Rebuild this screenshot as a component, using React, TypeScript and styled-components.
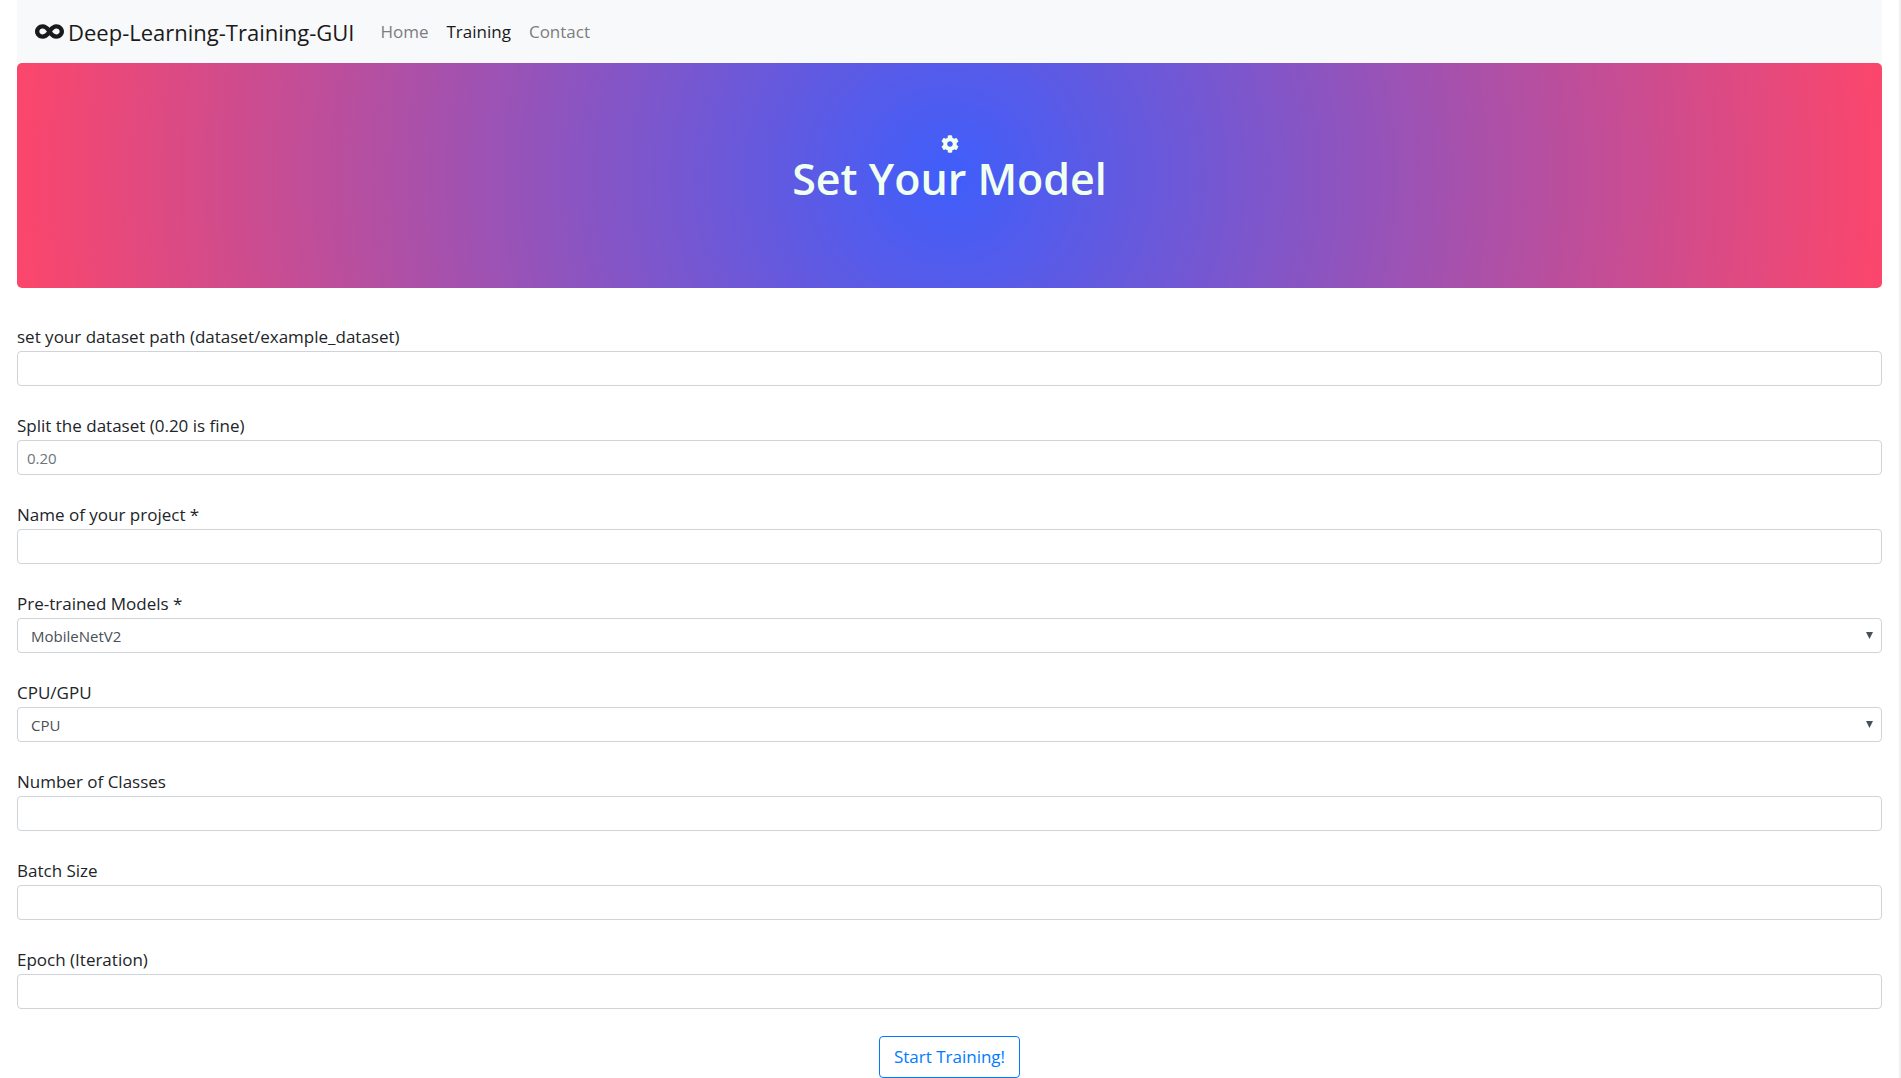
import React from "react";
import styled, { createGlobalStyle } from "styled-components";
import { FaCog, FaInfinity } from "react-icons/fa";

const GlobalStyle = createGlobalStyle`
  *, *::before, *::after { box-sizing: border-box; }
  body {
    margin: 0;
    background: #fff;
    color: #212529;
    font-family: "Segoe UI", "Open Sans", "Noto Sans", sans-serif;
    font-size: 17px;
    line-height: 26px;
  }
`;

const Page = styled.div`
  padding: 0 17px;
  min-height: 100vh;
  border-right: 2px solid #f1f1f1;
`;

const Navbar = styled.nav`
  display: flex;
  align-items: center;
  gap: 26px;
  height: 63px;
  padding: 0 18px;
  background: #f8f9fa;
`;

const Brand = styled.a`
  display: flex;
  align-items: center;
  gap: 4px;
  color: #1a1a1a;
  font-size: 22px;
  line-height: 32px;
  text-decoration: none;
`;

const NavLinks = styled.div`
  display: flex;
  gap: 18px;
`;

const NavLink = styled.a<{ $active?: boolean }>`
  color: ${(p) => (p.$active ? "#1a1a1a" : "#7c7d7d")};
  text-decoration: none;
`;

const Hero = styled.header`
  display: flex;
  flex-direction: column;
  align-items: center;
  height: 225px;
  padding-top: 72px;
  border-radius: 5px;
  background: radial-gradient(circle, #3f5efb 0%, #fc466b 100%);
  color: #f0fff0;
`;

const Title = styled.h1`
  margin: 0;
  font-size: 43px;
  line-height: 52px;
  font-weight: 600;
`;

const Form = styled.form`
  display: flex;
  flex-direction: column;
  gap: 27px;
  padding-top: 36px;
`;

const Field = styled.div`
  display: flex;
  flex-direction: column;
  gap: 1px;
`;

const Input = styled.input`
  width: 100%;
  height: 35px;
  padding: 4px 9px;
  border: 1px solid #ced4da;
  border-radius: 4px;
  background: #fff;
  color: #495057;
  font: inherit;
  font-size: 15px;
  &::placeholder { color: #6c757d; opacity: 1; }
`;

const SelectBox = styled.div`
  display: grid;
  align-items: center;
  & > * { grid-area: 1 / 1; }
`;

const Select = styled(Input).attrs({ as: "select" })`
  appearance: none;
  padding: 4px 13px;
`;

const Arrow = styled.svg`
  justify-self: end;
  margin-right: 9px;
  fill: #495057;
  pointer-events: none;
`;

const Submit = styled.button`
  align-self: center;
  height: 42px;
  padding: 0 14px;
  border: 1px solid #007bff;
  border-radius: 4px;
  background: #fff;
  color: #007bff;
  font: inherit;
`;

type FieldSpec = { id: string; label: string; placeholder?: string; options?: string[] };

const fields: FieldSpec[] = [
  { id: "path", label: "set your dataset path (dataset/example_dataset)" },
  { id: "split", label: "Split the dataset (0.20 is fine)", placeholder: "0.20" },
  { id: "project", label: "Name of your project *" },
  { id: "model", label: "Pre-trained Models *", options: ["MobileNetV2"] },
  { id: "device", label: "CPU/GPU", options: ["CPU", "GPU"] },
  { id: "classes", label: "Number of Classes" },
  { id: "batch", label: "Batch Size" },
  { id: "epoch", label: "Epoch (Iteration)" },
];

export default function App() {
  return (
    <Page>
      <GlobalStyle />
      <Navbar>
        <Brand href="#">
          <FaInfinity size={29} />
          Deep-Learning-Training-GUI
        </Brand>
        <NavLinks>
          <NavLink href="#">Home</NavLink>
          <NavLink href="#" $active>Training</NavLink>
          <NavLink href="#">Contact</NavLink>
        </NavLinks>
      </Navbar>
      <Hero>
        <FaCog size={18} />
        <Title>Set Your Model</Title>
      </Hero>
      <Form onSubmit={(e) => e.preventDefault()}>
        {fields.map((f) => (
          <Field key={f.id}>
            <label htmlFor={f.id}>{f.label}</label>
            {f.options ? (
              <SelectBox>
                <Select id={f.id}>
                  {f.options.map((o) => (
                    <option key={o}>{o}</option>
                  ))}
                </Select>
                <Arrow width="7" height="7" viewBox="0 0 7 7" aria-hidden="true">
                  <path d="M0 0h7L3.5 7z" />
                </Arrow>
              </SelectBox>
            ) : (
              <Input id={f.id} placeholder={f.placeholder} />
            )}
          </Field>
        ))}
        <Submit type="submit">Start Training!</Submit>
      </Form>
    </Page>
  );
}
